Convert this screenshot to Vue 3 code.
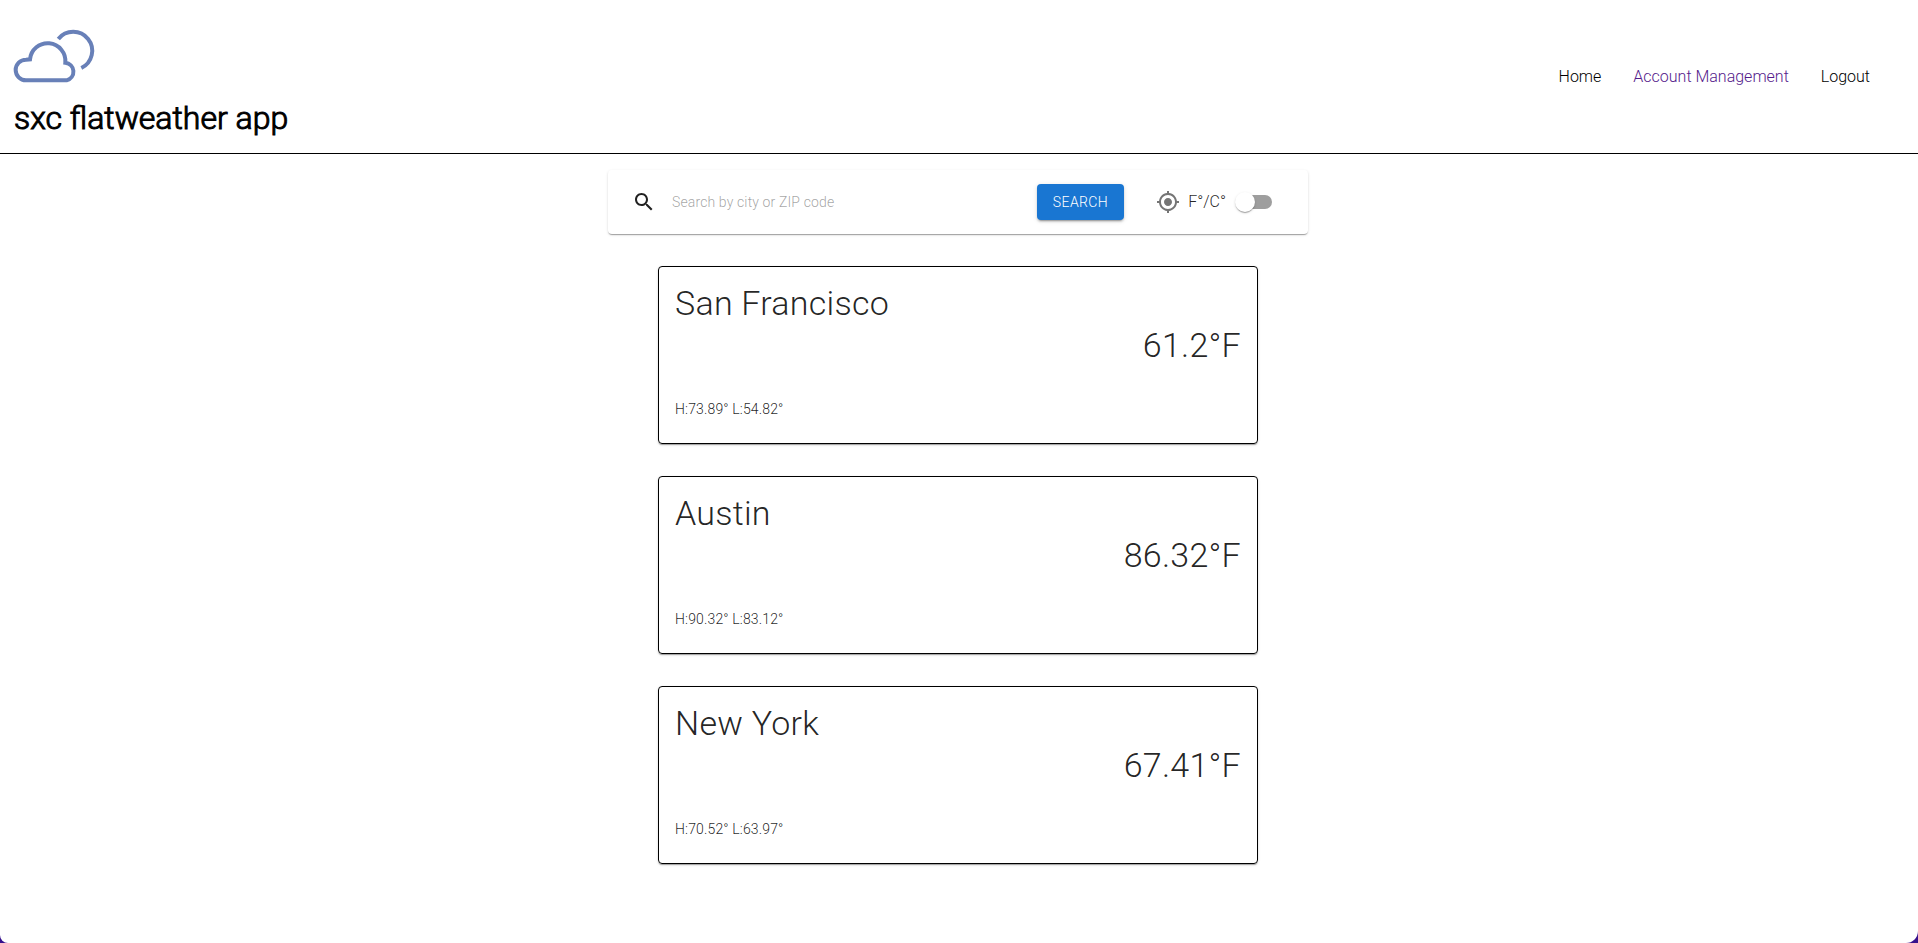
<script setup>
import { ref } from 'vue'

const query = ref('')
const celsius = ref(false)

const cities = [
  { name: 'San Francisco', temp: '61.2', high: '73.89', low: '54.82' },
  { name: 'Austin', temp: '86.32', high: '90.32', low: '83.12' },
  { name: 'New York', temp: '67.41', high: '70.52', low: '63.97' },
]

const links = [
  { label: 'Home', visited: false },
  { label: 'Account Management', visited: true },
  { label: 'Logout', visited: false },
]
</script>

<template>
  <div class="page">
    <header class="header">
      <div class="brand">
        <svg class="logo" viewBox="0 0 240 156" aria-hidden="true">
          <path d="M36 151A31 31 0 0 1 36 89L48 88A53 53 0 0 1 154 98A27 27 0 0 1 158 151Z" />
          <path d="M133 27A57 57 0 1 1 202 114" />
        </svg>
        <h1 class="title">sxc flatweather app</h1>
      </div>
      <nav class="nav">
        <a v-for="link in links" :key="link.label" href="#" :class="{ visited: link.visited }">{{ link.label }}</a>
      </nav>
    </header>

    <main class="main">
      <form class="search" @submit.prevent>
        <svg class="icon" viewBox="0 0 24 24" aria-hidden="true">
          <path d="M15.5 14h-.79l-.28-.27C15.41 12.59 16 11.11 16 9.5 16 5.91 13.09 3 9.5 3S3 5.91 3 9.5 5.91 16 9.5 16c1.61 0 3.09-.59 4.23-1.57l.27.28v.79l5 4.99L20.49 19l-4.99-5zm-6 0C7.01 14 5 11.99 5 9.5S7.01 5 9.5 5 14 7.01 14 9.5 11.99 14 9.5 14z" />
        </svg>
        <input v-model="query" class="field" type="text" placeholder="Search by city or ZIP code" aria-label="Search by city or ZIP code">
        <button class="submit" type="submit">SEARCH</button>
        <button class="locate" type="button" aria-label="Use my location">
          <svg class="icon" viewBox="0 0 24 24" aria-hidden="true">
            <path d="M12 8c-2.21 0-4 1.79-4 4s1.79 4 4 4 4-1.79 4-4-1.79-4-4-4zm8.94 3c-.46-4.17-3.77-7.48-7.94-7.94V1h-2v2.06C6.83 3.52 3.52 6.83 3.06 11H1v2h2.06c.46 4.17 3.77 7.48 7.94 7.94V23h2v-2.06c4.17-.46 7.48-3.77 7.94-7.94H23v-2h-2.06zM12 19c-3.87 0-7-3.13-7-7s3.13-7 7-7 7 3.13 7 7-3.13 7-7 7z" />
          </svg>
        </button>
        <label class="unit">
          <span>F°/C°</span>
          <input v-model="celsius" class="switch" type="checkbox" role="switch">
        </label>
      </form>

      <article v-for="city in cities" :key="city.name" class="card">
        <h2 class="city">{{ city.name }}</h2>
        <p class="temp">{{ city.temp }}°F</p>
        <p class="range">H:{{ city.high }}° L:{{ city.low }}°</p>
      </article>
    </main>
  </div>
</template>

<style>
body {
  background: #36108c;
}
</style>

<style scoped>
.page {
  box-sizing: border-box;
  min-height: 100vh;
  background: #fff;
  border-radius: 0 0 12px 8px;
  font-family: Roboto, "Liberation Sans", sans-serif;
  font-weight: 300;
  color: rgba(0, 0, 0, 0.87);
}

.header {
  display: flex;
  align-items: center;
  justify-content: space-between;
  padding: 0 48px 0 14px;
  border-bottom: 1px solid #000;
}

.brand {
  padding: 30px 0 14px;
}

.logo {
  display: block;
  width: 80px;
  height: 52px;
  overflow: visible;
  fill: none;
  stroke: #6880b8;
  stroke-width: 12;
}

.title {
  margin: 16px 0 0;
  font-size: 32px;
  line-height: 41px;
  font-weight: 300;
  color: #000;
  -webkit-text-stroke: 1px #000;
}

.nav {
  display: flex;
  gap: 32px;
  font-size: 16px;
  line-height: 24px;
}

.nav a {
  color: #000;
  text-decoration: none;
}

.nav a.visited {
  color: #551a8b;
}

.main {
  display: flex;
  flex-direction: column;
  align-items: center;
  gap: 32px;
  padding: 16px 18px 0 16px;
}

.search {
  box-sizing: border-box;
  display: flex;
  align-items: center;
  width: 100%;
  max-width: 700px;
  height: 64px;
  padding: 0 24px;
  border-radius: 4px;
  box-shadow: 0 2px 1px -1px rgba(0, 0, 0, 0.2), 0 1px 1px rgba(0, 0, 0, 0.14), 0 1px 3px rgba(0, 0, 0, 0.12);
}

.icon {
  display: block;
  flex: none;
  width: 24px;
  height: 24px;
  fill: currentColor;
}

.field {
  flex: 1;
  min-width: 0;
  margin: 0 16px;
  padding: 0;
  border: 0;
  outline: 0;
  background: none;
  font: inherit;
  font-size: 14px;
  line-height: 24px;
  letter-spacing: 0.00938em;
  color: inherit;
}

.field::placeholder {
  color: inherit;
  opacity: 0.42;
}

.submit {
  height: 36px;
  padding: 0 16px;
  border: 0;
  border-radius: 4px;
  background: #1976d2;
  color: #fff;
  font: inherit;
  font-size: 14px;
  letter-spacing: 0.02857em;
  box-shadow: 0 3px 1px -2px rgba(0, 0, 0, 0.2), 0 2px 2px rgba(0, 0, 0, 0.14), 0 1px 5px rgba(0, 0, 0, 0.12);
}

.locate {
  margin-left: 32px;
  padding: 0;
  border: 0;
  background: none;
  color: #757575;
}

.unit {
  display: flex;
  align-items: center;
  gap: 12px;
  margin: 0 12px 0 8px;
  font-size: 16px;
  line-height: 24px;
}

.switch {
  appearance: none;
  position: relative;
  width: 34px;
  height: 14px;
  margin: 0;
  border-radius: 7px;
  background: #9e9e9e;
}

.switch::before {
  content: "";
  position: absolute;
  top: -3px;
  left: -3px;
  width: 20px;
  height: 20px;
  border-radius: 50%;
  background: #fff;
  box-shadow: 0 2px 1px -1px rgba(0, 0, 0, 0.2), 0 1px 1px rgba(0, 0, 0, 0.14), 0 1px 3px rgba(0, 0, 0, 0.12);
}

.switch:checked::before {
  left: 17px;
}

.card {
  box-sizing: border-box;
  width: 100%;
  max-width: 600px;
  padding: 15px 16px 24px;
  border: 1px solid #000;
  border-radius: 4px;
  box-shadow: 0 2px 1px -1px rgba(0, 0, 0, 0.2), 0 1px 1px rgba(0, 0, 0, 0.14), 0 1px 3px rgba(0, 0, 0, 0.12);
}

.city,
.temp {
  margin: 0;
  font-size: 34px;
  line-height: 42px;
  font-weight: 300;
  letter-spacing: 0.00735em;
}

.temp {
  text-align: right;
}

.range {
  margin: 33px 0 0;
  font-size: 14px;
  line-height: 20px;
  letter-spacing: 0.01071em;
}
</style>
